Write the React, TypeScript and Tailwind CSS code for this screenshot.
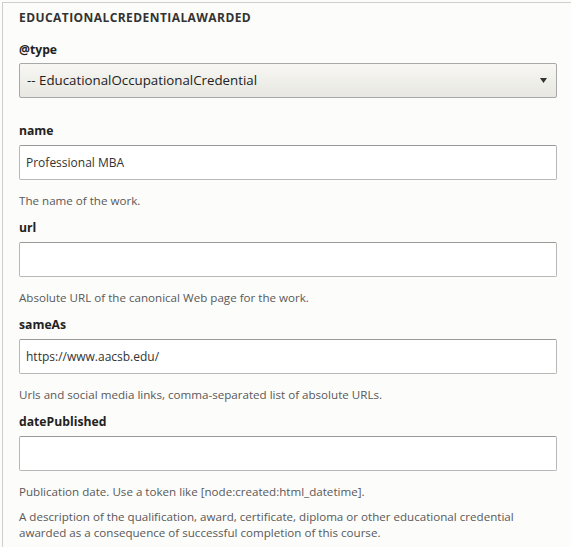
import React from "react";

const font = { fontFamily: '"Open Sans", "DejaVu Sans", sans-serif' };

function Field({
  label,
  value,
  desc,
}: {
  label: string;
  value?: string;
  desc: string;
}) {
  return (
    <div className="mb-[9px]">
      <div className="text-[12.2px] leading-[20px] font-bold text-[#222]">{label}</div>
      <div className="mt-[4px] h-[35px] border border-[#b8b8b8] border-t-[#999] rounded-[2px] bg-white flex items-center px-[6px] text-[12px] text-[#333]">
        {value}
      </div>
      <div className="mt-[13px] text-[11.6px] leading-[16px] text-[#595959]">{desc}</div>
    </div>
  );
}

export default function App() {
  return (
    <div className="w-[571px] h-[547px] overflow-hidden bg-[#fcfcfa] pt-[2px] pl-[2px]" style={font}>
      <div className="h-full border-l border-t border-[#cfcfcf] pl-[16px] pr-[14px] pt-[7px]">
        <div className="text-[12px] leading-[16px] font-bold uppercase text-[#333] tracking-[0.036em]">
          EducationalCredentialAwarded
        </div>
        <div className="mt-[14px] text-[12.2px] leading-[20px] font-bold text-[#222]">@type</div>
        <div className="mt-[3px] h-[35px] border border-[#a8a8a8] rounded-[2px] bg-gradient-to-b from-[#f7f7f4] to-[#e8e7e1] flex items-center justify-between pl-[7px] pr-[9px] text-[13.3px] text-[#222]">
          <span>-- EducationalOccupationalCredential</span>
          <svg width="7" height="5" viewBox="0 0 7 5">
            <path d="M0 0H7L3.5 5Z" fill="#333" />
          </svg>
        </div>
        <div className="mt-[23px]">
          <Field label="name" value="Professional MBA" desc="The name of the work." />
          <Field label="url" desc="Absolute URL of the canonical Web page for the work." />
          <Field
            label="sameAs"
            value="https://www.aacsb.edu/"
            desc="Urls and social media links, comma-separated list of absolute URLs."
          />
          <Field
            label="datePublished"
            desc="Publication date. Use a token like [node:created:html_datetime]."
          />
          <div className="text-[11.6px] leading-[16px] text-[#595959] w-[525px]">
            A description of the qualification, award, certificate, diploma or other educational credential
            awarded as a consequence of successful completion of this course.
          </div>
        </div>
      </div>
    </div>
  );
}
